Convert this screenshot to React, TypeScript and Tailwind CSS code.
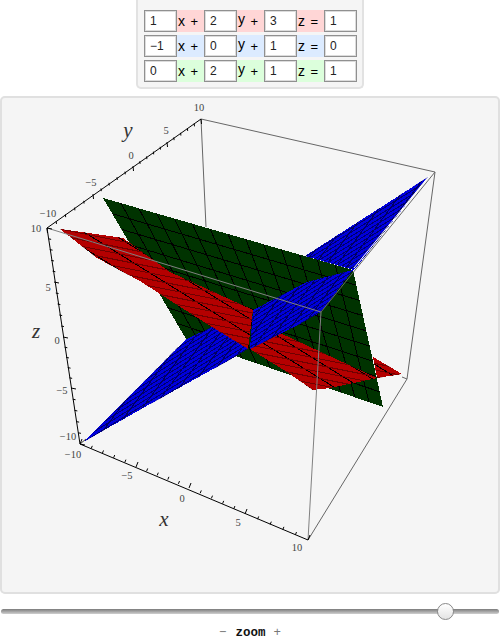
import React from 'react';

type Pt = [number, number];

const rows = [
  { bg: 'bg-[#ffd6d6]', values: ['1', '2', '3', '1'] },
  { bg: 'bg-[#dcebff]', values: ['\u22121', '0', '1', '0'] },
  { bg: 'bg-[#dcffdc]', values: ['0', '2', '1', '1'] },
];

const greenQuad: Pt[] = [[103, 198], [353, 270], [383, 407], [186, 339]];
const redPolys: Pt[][] = [
  [[60, 229], [123, 238], [170, 272], [253, 310], [248, 349], [212, 327], [157, 292], [140, 281], [97, 258]],
  [[250, 349], [280, 333], [377, 378], [330, 388], [313, 390], [287, 372]],
  [[373, 357], [402, 374], [377, 378]],
];
const bluePolys: Pt[][] = [
  [[85, 441], [185, 340], [212, 327], [248, 349], [233, 358], [143, 408]],
  [[253, 310], [307, 282], [353, 270], [321, 312], [298, 325], [250, 349]],
  [[305, 256], [428, 177], [354, 270]],
];

const xAxis: Pt[] = [[80, 444], [136, 467], [189, 488], [245, 514], [308, 540]];
const yAxis: Pt[] = [[47, 228], [93, 194], [133, 166], [167, 142], [201, 119]];
const zAxis: Pt[] = [[47, 228], [54, 282], [63, 337], [71, 388], [80, 444]];

const pts = (p: Pt[]) => p.map((q) => q.join(',')).join(' ');
const mix = (a: Pt, b: Pt, t: number): Pt => [a[0] + (b[0] - a[0]) * t, a[1] + (b[1] - a[1]) * t];

function quadLines(q: Pt[], nu: number, nv: number) {
  const out: [Pt, Pt][] = [];
  for (let i = 1; i < nu; i++) out.push([mix(q[0], q[1], i / nu), mix(q[3], q[2], i / nu)]);
  for (let j = 1; j < nv; j++) out.push([mix(q[0], q[3], j / nv), mix(q[1], q[2], j / nv)]);
  return out;
}

// parallel lines across the plot, clipped to the surface afterwards
function stripes(slope: number, spacing: number, from: number, to: number) {
  const out: [Pt, Pt][] = [];
  for (let c = from; c < to; c += spacing) out.push([[0, c], [500, c + slope * 500]]);
  return out;
}

function Lines({ lines, width, color = '#000' }: { lines: [Pt, Pt][]; width: number; color?: string }) {
  return (
    <>
      {lines.map(([a, b], i) => (
        <line key={i} x1={a[0]} y1={a[1]} x2={b[0]} y2={b[1]} stroke={color} strokeWidth={width} />
      ))}
    </>
  );
}

function Axis({ stops, dx, dy }: { stops: Pt[]; dx: number; dy: number }) {
  const ticks = [];
  for (let s = 0; s < 4; s++) {
    for (let i = 0; i <= 5; i++) {
      if (i === 5 && s < 3) continue;
      const p = mix(stops[s], stops[s + 1], i / 5);
      const k = i === 0 || i === 5 ? 1 : 0.55;
      ticks.push(<line key={s + '-' + i} x1={p[0]} y1={p[1]} x2={p[0] + dx * k} y2={p[1] + dy * k} stroke="#000" strokeWidth={1} />);
    }
  }
  return (
    <>
      <line x1={stops[0][0]} y1={stops[0][1]} x2={stops[4][0]} y2={stops[4][1]} stroke="#000" strokeWidth={1} />
      {ticks}
    </>
  );
}

const tickLabels: [string, number, number][] = [
  ['10', 199, 111], ['5', 166, 134], ['0', 131, 159], ['\u22125', 91, 186], ['\u221210', 48, 217],
  ['10', 36, 232], ['5', 48, 291], ['0', 57, 344], ['\u22125', 62, 394], ['\u221210', 68, 440],
  ['\u221210', 73, 458], ['\u22125', 127, 479], ['0', 182, 502], ['5', 238, 526], ['10', 297, 551],
];

function Plot() {
  const greenGrid = quadLines(greenQuad, 14, 9);
  const redA = stripes(0.62, 16, -300, 400);
  const redB = stripes(0.2, 6.5, 100, 400);
  const blueA = stripes(-0.62, 4, 250, 800);
  const blueB = stripes(-1.35, 15, 300, 1000);

  return (
    <svg viewBox="0 96 500 498" className="block w-[500px] h-[498px]">
      <defs>
        <clipPath id="green-clip"><polygon points={pts(greenQuad)} /></clipPath>
        <clipPath id="red-clip">{redPolys.map((p, i) => <polygon key={i} points={pts(p)} />)}</clipPath>
        <clipPath id="blue-clip">{bluePolys.map((p, i) => <polygon key={i} points={pts(p)} />)}</clipPath>
      </defs>

      {/* back edges of the box */}
      <g stroke="#666" strokeWidth={1} fill="none">
        <polyline points="206,227 201,119 435,172 407,379 308,540" />
        <line x1={407} y1={379} x2={402} y2={377} />
      </g>

      <g shapeRendering="crispEdges">
        <polygon points={pts(greenQuad)} fill="#003300" />
        <g clipPath="url(#green-clip)"><Lines lines={greenGrid} width={1} /></g>
        {redPolys.map((p, i) => <polygon key={i} points={pts(p)} fill="#b40000" />)}
        <g clipPath="url(#red-clip)">
          <Lines lines={redA} width={1} />
          <Lines lines={redB} width={1} color="#700000" />
        </g>
        {bluePolys.map((p, i) => <polygon key={i} points={pts(p)} fill="#0000dc" />)}
        <g clipPath="url(#blue-clip)">
          <Lines lines={blueA} width={1} color="#00006a" />
          <Lines lines={blueB} width={1} color="#000060" />
        </g>
      </g>

      {/* front edges, drawn over the surfaces */}
      <g fill="none" strokeWidth={1}>
        <polyline points="47,228 321,312 308,540" stroke="#808080" />
        <line x1={321} y1={312} x2={435} y2={172} stroke="#666" />
        <line x1={354} y1={268} x2={429} y2={176} stroke="#fff" />
        <line x1={80} y1={444} x2={86} y2={439} stroke="#333" />
      </g>

      <Axis stops={xAxis} dx={2} dy={-5} />
      <Axis stops={yAxis} dx={0.5} dy={5} />
      <Axis stops={zAxis} dx={5} dy={1} />

      <g fontFamily="'Liberation Serif', serif" fontSize={10.5} fill="#444" textAnchor="middle">
        {tickLabels.map(([t, x, y], i) => <text key={i} x={x} y={y}>{t}</text>)}
      </g>
      <g fontFamily="'Liberation Serif', serif" fontSize={21} fontStyle="italic" fill="#333" textAnchor="middle">
        <text x={128} y={137}>y</text>
        <text x={36} y={338}>z</text>
        <text x={164} y={526}>x</text>
      </g>
    </svg>
  );
}

function Cell({ value }: { value: string }) {
  return (
    <input
      readOnly
      value={value}
      className="w-[33px] h-[22px] shrink-0 bg-white border border-[#909090] shadow-[inset_0_0_0_1px_#dcdcdc] pl-[5px] text-[12px] text-[#222] outline-none font-['Liberation_Sans',sans-serif]"
    />
  );
}

function Label({ name, sign }: { name: string; sign: string }) {
  return (
    <div className="w-[27px] h-[22px] shrink-0 flex items-center justify-between pl-[1px] pr-[6px] text-[14px] leading-none text-black font-['Liberation_Sans',sans-serif]">
      <span className={name === 'y' ? 'mb-[5px]' : ''}>{name}</span>
      <span className="text-[13px]">{sign}</span>
    </div>
  );
}

export default function App() {
  return (
    <div className="w-[500px] h-[642px] bg-white flex flex-col items-center overflow-hidden">
      <div className="w-[228px] h-[89px] shrink-0 flex flex-col gap-[3px] pt-[10px] pl-[6px] bg-[#f5f5f5] border-2 border-t-0 border-[#e2e2e2] rounded-b-[5px] mb-[7px] box-border">
        {rows.map((row, i) => (
          <div key={i} className={'w-[212px] h-[22px] flex ' + row.bg}>
            <Cell value={row.values[0]} />
            <Label name="x" sign="+" />
            <Cell value={row.values[1]} />
            <Label name="y" sign="+" />
            <Cell value={row.values[2]} />
            <Label name="z" sign="=" />
            <Cell value={row.values[3]} />
          </div>
        ))}
      </div>

      <div className="w-[500px] h-[498px] shrink-0 bg-[#f5f5f5] outline-2 -outline-offset-2 outline-[#e0e0e0] rounded-[5px]">
        <Plot />
      </div>

      <div className="relative w-[498px] h-[5px] mt-[15px] shrink-0 rounded-full bg-gradient-to-b from-[#7c7c7c] to-[#d0d0d0]">
        <div className="absolute left-[436px] -top-[6px] w-[17px] h-[17px] rounded-full border border-[#8a8a8a] bg-gradient-to-b from-white to-[#e4e4e4]" />
      </div>

      <div className="mt-[13px] flex items-center font-['Liberation_Mono',monospace] text-[12.5px] leading-none">
        <span className="text-[#777] mr-[9px]">−</span>
        <span className="font-bold text-[#111]">zoom</span>
        <span className="text-[#777] ml-[8px]">+</span>
      </div>
    </div>
  );
}
